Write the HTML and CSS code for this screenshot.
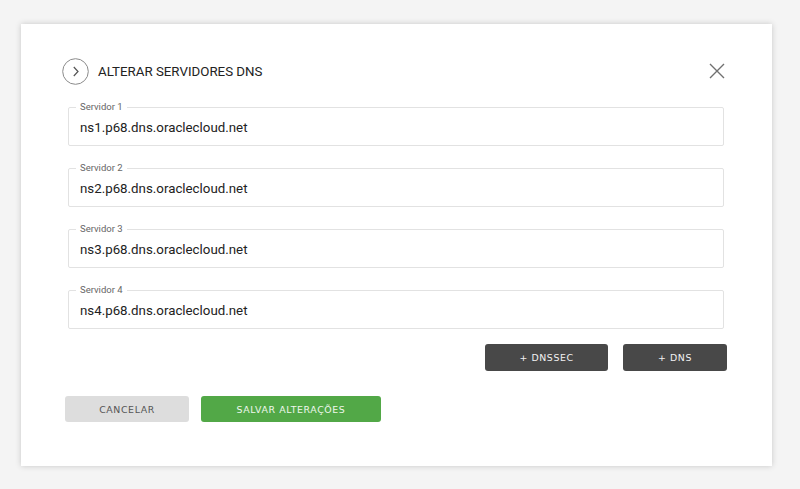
FILE: index.html
```html
<!DOCTYPE html>
<html lang="pt">
<head>
<meta charset="utf-8">
<link rel="stylesheet" href="styles.css">
</head>
<body>
<div class="modal">
  <div class="header">
    <span class="circle">
      <svg width="27" height="27" viewBox="0 0 27 27"><circle cx="13.5" cy="13.5" r="12.8" fill="none" stroke="#8a8a8a" stroke-width="1"/><path d="M11.8 9 L16 13.5 L11.8 18" fill="none" stroke="#555" stroke-width="1.2"/></svg>
    </span>
    <h1 class="title">ALTERAR SERVIDORES DNS</h1>
    <span class="close">
      <svg width="16" height="16" viewBox="0 0 16 16"><path d="M1 1 L15 15 M15 1 L1 15" stroke="#707070" stroke-width="1.4" fill="none"/></svg>
    </span>
  </div>
  <div class="fields">
    <div class="field"><span class="label">Servidor 1</span><span class="value">ns1.p68.dns.oraclecloud.net</span></div>
    <div class="field"><span class="label">Servidor 2</span><span class="value">ns2.p68.dns.oraclecloud.net</span></div>
    <div class="field"><span class="label">Servidor 3</span><span class="value">ns3.p68.dns.oraclecloud.net</span></div>
    <div class="field"><span class="label">Servidor 4</span><span class="value">ns4.p68.dns.oraclecloud.net</span></div>
  </div>
  <div class="add-row">
    <button class="btn dark w-dnssec">+ DNSSEC</button>
    <button class="btn dark w-dns">+ DNS</button>
  </div>
  <div class="actions">
    <button class="btn gray">CANCELAR</button>
    <button class="btn green">SALVAR ALTERAÇÕES</button>
  </div>
</div>
</body>
</html>
```
FILE: styles.css
```css
* { box-sizing: border-box; }
html, body { margin: 0; padding: 0; }
body {
  background: #f4f4f4;
  font-family: Roboto, "Liberation Sans", sans-serif;
  width: 800px;
  height: 489px;
  padding: 24px 28px 0 21px;
}
.modal {
  width: 751px;
  height: 442px;
  background: #fff;
  box-shadow: 0 0 6px rgba(0,0,0,0.18);
  padding-top: 33px;
}
.header {
  display: flex;
  align-items: center;
  height: 28px;
  padding-left: 41px;
  padding-right: 48px;
}
.circle { display: block; width: 27px; height: 27px; }
.circle svg { display: block; }
.title {
  margin: 0 0 0 9px;
  font-size: 13.3px;
  font-weight: 400;
  color: #222;
  flex: 1;
}
.close { display: block; width: 16px; height: 16px; margin-right: -1px; }
.close svg { display: block; }
.fields {
  margin: 22px 0 0 47px;
  width: 656px;
  display: flex;
  flex-direction: column;
  gap: 22px;
}
.field {
  position: relative;
  height: 39px;
  border: 1px solid #e2e2e2;
  border-radius: 2px;
  display: flex;
  align-items: center;
  padding-left: 11px;
}
.label {
  position: absolute;
  left: 7px;
  top: -7px;
  background: #fff;
  padding: 0 4px;
  font-size: 9.5px;
  line-height: 12px;
  color: #666;
}
.value {
  font-size: 13.3px;
  color: #222;
  padding-top: 1px;
}
.add-row {
  display: flex;
  justify-content: flex-end;
  gap: 15px;
  margin-top: 15px;
  padding-right: 45px;
}
.btn {
  border: none;
  border-radius: 3px;
  font-family: "DejaVu Sans", Verdana, sans-serif;
  font-size: 9.4px;
  letter-spacing: 0.6px;
  padding: 0;
  height: 27px;
  cursor: pointer;
}
.dark { background: #484848; color: #f2f2f2; }
.w-dnssec { width: 123px; }
.w-dns { width: 104px; }
.actions {
  display: flex;
  gap: 12px;
  margin-top: 25px;
  padding-left: 44px;
}
.gray { background: #dddddd; color: #555; width: 124px; height: 26px; }
.green { background: #52a847; color: #eef7ec; width: 180px; height: 26px; }
```
